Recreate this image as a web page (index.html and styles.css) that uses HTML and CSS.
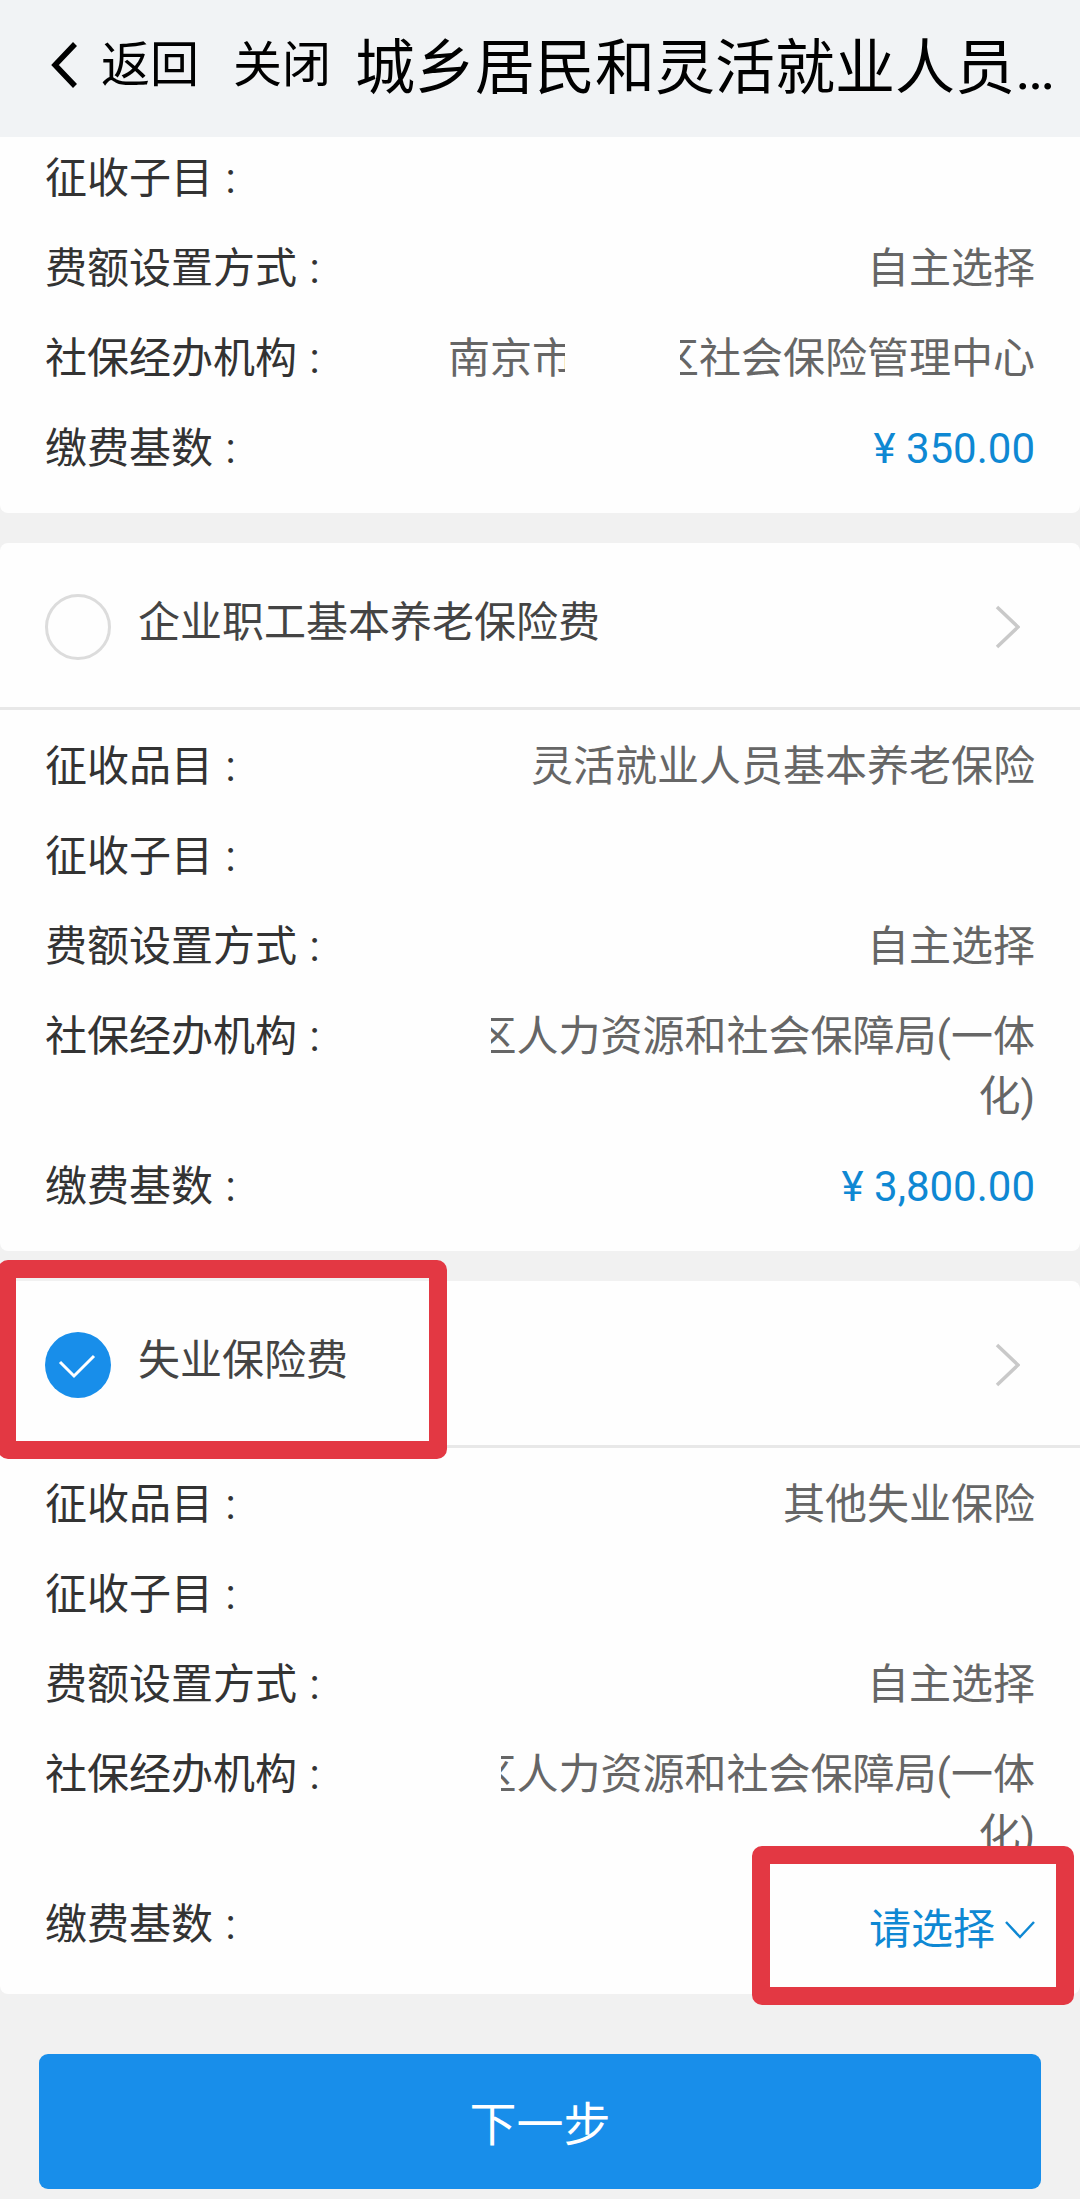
FILE: index.html
```html
<!DOCTYPE html>
<html lang="zh-CN">
<head>
    <meta charset="UTF-8">
    <meta name="viewport" content="width=device-width, initial-scale=1.0">
    <title>城乡居民和灵活就业人员</title>
    <link rel="stylesheet" href="styles.css">
</head>
<body>
    <div class="header">
        <svg class="back-icon" width="28" height="48" viewBox="0 0 28 48"><path d="M25 3 L5 24 L25 45" fill="none" stroke="#000" stroke-width="5.5"/></svg>
        <span class="back">返回</span>
        <span class="close">关闭</span>
        <h1>城乡居民和灵活就业人员…</h1>
    </div>

    <div class="card first">
        <div class="rows">
            <div class="row"><span class="label">征收子目 :</span></div>
            <div class="row"><span class="label">费额设置方式 :</span><span class="value">自主选择</span></div>
            <div class="row">
                <span class="label">社保经办机构 :</span>
                <div class="value org"><span class="cut-right">南京市</span><span class="cut-left">区</span><span>社会保险管理中心</span></div>
            </div>
            <div class="row"><span class="label">缴费基数 :</span><span class="value price">¥ 350.00</span></div>
        </div>
    </div>

    <div class="card">
        <div class="card-title">
            <span class="radio"></span>
            <span class="name">企业职工基本养老保险费</span>
            <svg class="arrow" width="28" height="44" viewBox="0 0 28 44"><path d="M5 2 L26 22 L5 42" fill="none" stroke="#c9c9c9" stroke-width="3.5"/></svg>
        </div>
        <div class="rows">
            <div class="row"><span class="label">征收品目 :</span><span class="value">灵活就业人员基本养老保险</span></div>
            <div class="row"><span class="label">征收子目 :</span></div>
            <div class="row"><span class="label">费额设置方式 :</span><span class="value">自主选择</span></div>
            <div class="row">
                <span class="label">社保经办机构 :</span>
                <div class="value">
                    <div class="org"><span class="cut-left wide">区</span><span>人力资源和社会保障局(一体</span></div>
                    <div>化)</div>
                </div>
            </div>
            <div class="row"><span class="label">缴费基数 :</span><span class="value price">¥ 3,800.00</span></div>
        </div>
    </div>

    <div class="card">
        <div class="card-title">
            <span class="radio checked">
                <svg width="66" height="66" viewBox="0 0 66 66"><path d="M15 30 L29 44 L49 24" fill="none" stroke="#fff" stroke-width="3"/></svg>
            </span>
            <span class="name">失业保险费</span>
            <svg class="arrow" width="28" height="44" viewBox="0 0 28 44"><path d="M5 2 L26 22 L5 42" fill="none" stroke="#c9c9c9" stroke-width="3.5"/></svg>
            <div class="mark mark-title"></div>
        </div>
        <div class="rows">
            <div class="row"><span class="label">征收品目 :</span><span class="value">其他失业保险</span></div>
            <div class="row"><span class="label">征收子目 :</span></div>
            <div class="row"><span class="label">费额设置方式 :</span><span class="value">自主选择</span></div>
            <div class="row">
                <span class="label">社保经办机构 :</span>
                <div class="value">
                    <div class="org"><span class="cut-left narrow">区</span><span>人力资源和社会保障局(一体</span></div>
                    <div>化)</div>
                </div>
            </div>
            <div class="row select-row">
                <span class="label">缴费基数 :</span>
                <span class="value select">请选择<svg width="30" height="20" viewBox="0 0 30 20"><path d="M1 2 L15 17 L29 2" fill="none" stroke="#0e88d3" stroke-width="2.5"/></svg></span>
                <div class="mark mark-select"></div>
            </div>
        </div>
    </div>

    <button class="next">下一步</button>
</body>
</html>
```
FILE: styles.css
```css
* {
    box-sizing: border-box;
}
body {
    margin: 0;
    height: 2199px;
    background: #f1f1f1;
    font-family: Roboto, "Noto Sans CJK SC", sans-serif;
    font-size: 42px;
    line-height: 60px;
    color: #333;
    overflow: hidden;
}
.header {
    display: flex;
    height: 137px;
    padding: 0 20px 8px 50px;
    background: #f1f3f5;
    align-items: center;
    white-space: nowrap;
    color: #000;
}
.back-icon {
    margin-top: 1px;
}
.back, .close {
    margin-top: 2px;
    font-size: 49px;
}
.back {
    margin-left: 23px;
}
.close {
    margin-left: 34px;
}
.header h1 {
    margin: 8px 0 0 24px;
    font-size: 60px;
    font-weight: normal;
}
.card {
    background: #fefefe;
    border-radius: 8px;
    margin-bottom: 30px;
}
.card.first {
    border-radius: 0 0 8px 8px;
}
.card-title {
    position: relative;
    display: flex;
    align-items: center;
    height: 167px;
    padding: 0 60px 0 45px;
    border-bottom: 3px solid #e8e8e8;
}
.radio {
    width: 66px;
    height: 66px;
    margin-top: 4px;
    border: 3px solid #dcdcdc;
    border-radius: 50%;
}
.radio.checked {
    border: none;
    background: #188eea;
}
.radio svg {
    display: block;
}
.name {
    flex: 1;
    margin: 0 0 5px 27px;
    color: #444;
}
.arrow {
    margin-top: 4px;
}
.rows {
    padding: 27px 45px 34px 45px;
}
.first .rows {
    padding-top: 12px;
}
.row {
    position: relative;
    display: flex;
    justify-content: space-between;
    min-height: 60px;
    margin-bottom: 30px;
}
.row:last-child {
    margin-bottom: 0;
}
.label {
    word-spacing: 2px;
}
.value {
    color: #666;
    text-align: right;
}
.org {
    display: flex;
    justify-content: flex-end;
}
.cut-right {
    width: 117px;
    margin-right: 115px;
    overflow: hidden;
    white-space: nowrap;
}
.cut-left {
    display: flex;
    justify-content: flex-end;
    width: 19px;
    overflow: hidden;
}
.cut-left.wide {
    width: 26px;
}
.cut-left.narrow {
    width: 16px;
}
.price, .select {
    color: #0e88d3;
}
.select-row {
    height: 65px;
}
.select {
    display: flex;
    align-items: center;
    gap: 10px;
    padding-top: 5px;
}
/* red highlight frames */
.mark {
    position: absolute;
    border: 18px solid #e33843;
    border-radius: 10px;
}
.mark-title {
    left: -2px;
    top: -21px;
    width: 449px;
    height: 199px;
}
.mark-select {
    right: -39px;
    top: -49px;
    width: 322px;
    height: 159px;
}
.next {
    display: block;
    width: 1002px;
    height: 135px;
    margin: 60px auto 0;
    padding: 0 0 3px;
    border: none;
    border-radius: 9px;
    background: #188eea;
    color: #fff;
    font-family: inherit;
    font-size: 47px;
}
```
